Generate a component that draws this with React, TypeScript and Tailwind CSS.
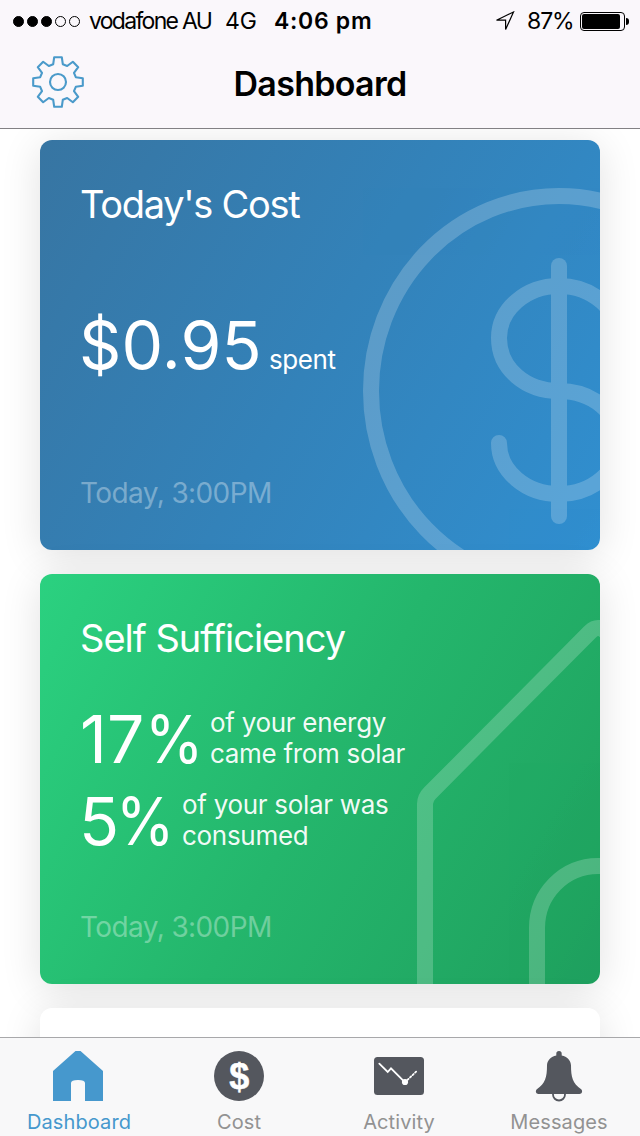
import type { ReactNode } from 'react';
import clsx from 'clsx';

// One gear tooth, pointing up; the outline repeats it every 45 degrees
const TOOTH = [
  [-4.8, -17.8],
  [-3.8, -24.8],
  [3.8, -24.8],
  [4.8, -17.8],
];

const gearPoints = Array.from({ length: 8 }, (_, i) => {
  const angle = (i * Math.PI) / 4;
  return TOOTH.map(([x, y]) => {
    const px = x * Math.cos(angle) - y * Math.sin(angle);
    const py = x * Math.sin(angle) + y * Math.cos(angle);
    return `${px.toFixed(2)},${py.toFixed(2)}`;
  }).join(' ');
}).join(' ');

function GearIcon() {
  return (
    <svg viewBox="-26 -26 52 52" className="h-[52px] w-[52px]" fill="none" stroke="#4a9aca" strokeWidth="2.1" strokeLinejoin="round">
      <polygon points={gearPoints} />
      <circle r="8" />
    </svg>
  );
}

function StatusBar() {
  return (
    <div className="flex h-[42px] items-center pl-[13px] pr-[11px] text-[23px] leading-none">
      <div className="flex gap-[3px]">
        {[1, 2, 3, 4, 5].map((dot) => (
          <span key={dot} className={clsx('h-[11px] w-[11px] rounded-full border border-black', dot <= 3 && 'bg-black')} />
        ))}
      </div>
      <span className="ml-[9px] w-[136px] whitespace-nowrap tracking-[-1.7px]">vodafone AU</span>
      <span className="w-[49px] tracking-[-0.2px]">4G</span>
      <span className="whitespace-nowrap font-semibold tracking-[0.7px]">4:06 pm</span>
      <svg viewBox="0 0 20 20" className="ml-auto mr-[12px] h-5 w-5" fill="none" stroke="black" strokeWidth="1.2">
        <path d="M18.5 1 L1.5 9.2 H10.6 V18.6 Z" />
      </svg>
      <span className="w-[53px] tracking-[-1.1px]">87%</span>
      <div className="flex items-center">
        <div className="h-[19px] w-[45px] rounded-[4px] border border-black p-px">
          <div className="h-full w-[38px] rounded-[2px] bg-black" />
        </div>
        <div className="ml-px h-[7px] w-[3px] rounded-r-full bg-black" />
      </div>
    </div>
  );
}

interface CardProps {
  title: string;
  titleClassName: string;
  time: string;
  className: string;
  art: ReactNode;
  children: ReactNode;
}

function Card({ title, titleClassName, time, className, art, children }: CardProps) {
  return (
    <section
      className={clsx(
        'relative flex h-[410px] shrink-0 flex-col overflow-hidden rounded-[12px] bg-linear-120 pb-[43px] pl-[40px] pt-[45px] text-white shadow-[0_6px_40px_rgba(0,0,0,0.12)]',
        className
      )}
    >
      <svg viewBox="0 0 560 410" className="absolute inset-0 h-full w-full">
        <g opacity="0.2" fill="none" stroke="white" strokeWidth="16" strokeLinecap="round">
          {art}
        </g>
      </svg>
      <h2 className={clsx('text-[38px] leading-none', titleClassName)}>{title}</h2>
      {children}
      <p className="mt-auto text-[28px] leading-none tracking-[-0.6px] text-white/35">{time}</p>
    </section>
  );
}

interface StatProps {
  value: number;
  className: string;
  children: ReactNode;
}

function Stat({ value, className, children }: StatProps) {
  return (
    <div className="flex h-[66px]">
      <span className={clsx('shrink-0 whitespace-nowrap text-[66px] leading-[64px]', className)}>
        {value}
        <span className="inline-block origin-left scale-x-90">%</span>
      </span>
      <p className="text-[26px] leading-[31px] tracking-[-0.3px] text-white/95">{children}</p>
    </div>
  );
}

const tabs = [
  {
    label: 'Dashboard',
    icon: <path fill="#4698cd" d="M21.5 0H26.5L49 20V50H31V32Q31 29 24 29Q17 29 17 32V50H-1V20Z" />,
  },
  {
    label: 'Cost',
    icon: (
      <>
        <circle cx="25" cy="25" r="25" fill="#54575e" />
        <text x="25.2" y="37.5" textAnchor="middle" fill="white" stroke="white" strokeWidth="0.5" className="font-['Liberation_Sans'] text-[36px] font-bold">
          $
        </text>
      </>
    ),
  },
  {
    label: 'Activity',
    icon: (
      <>
        <rect y="6" width="50" height="38" rx="3.5" fill="#54575e" />
        <g fill="none" stroke="white" strokeWidth="1.8" strokeLinecap="round">
          <path d="M5.3 12.6L13.7 21L17 17.3L31 31.3" />
          <path d="M31 31.3L42.5 20.3" strokeDasharray="1.4 2.1" />
        </g>
        <circle cx="31" cy="31" r="3.1" fill="white" />
      </>
    ),
  },
  {
    label: 'Messages',
    icon: (
      <>
        <circle cx="25" cy="43.5" r="6" fill="none" stroke="#54575e" strokeWidth="1.8" />
        <path
          fill="#54575e"
          d="M22.3 4.4V2.7A2.7 2.7 0 0 1 27.7 2.7V4.4C33 5.4 37 9.3 37 14.5C37 26 38.6 32.5 47.2 38.3C49 40 48 43 45.5 43H4.5C2 43 1 40 2.8 38.3C11.4 32.5 13 26 13 14.5C13 9.3 17 5.4 22.3 4.4Z"
        />
      </>
    ),
  },
];

export default function App() {
  return (
    <div className="flex h-[1136px] w-[640px] flex-col overflow-hidden bg-white font-['Inter','Liberation_Sans',sans-serif] text-black">
      <header className="relative z-10 h-[129px] shrink-0 border-b border-[#828084] bg-[#faf7fb]">
        <StatusBar />
        <div className="grid h-[84px] grid-cols-[1fr_auto_1fr] items-center pl-8">
          <button type="button" aria-label="Settings" className="w-[52px] pb-1">
            <GearIcon />
          </button>
          <h1 className="-ml-8 text-[34px] font-semibold leading-none tracking-[-0.7px]">Dashboard</h1>
        </div>
      </header>

      <main className="flex min-h-0 flex-1 flex-col gap-6 overflow-hidden px-10 pt-[11px]">
        <Card
          title="Today's Cost"
          titleClassName="tracking-[-1.3px]"
          time="Today, 3:00PM"
          className="from-[#3775a2] via-[#3382b9] to-[#308fd0]"
          art={
            <>
              <ellipse cx="519" cy="251" rx="188" ry="195" />
              <path d="M519 126V376" />
              <path d="M579 198A60 52 0 0 0 459 198C459 229 486 251 519 251C552 251 579 272 579 303A60 51 0 0 1 459 303" />
            </>
          }
        >
          <div className="mt-[89px] flex items-baseline gap-[7px]">
            <span className="-ml-px text-[66px] leading-none tracking-[0.2px]">$0.95</span>
            <span className="text-[26px] leading-none tracking-[-0.4px]">spent</span>
          </div>
        </Card>

        <Card
          title="Self Sufficiency"
          titleClassName="tracking-[-1px]"
          time="Today, 3:00PM"
          className="from-[#2bd180] via-[#24b66c] to-[#1fa05e]"
          art={
            <>
              <path d="M385 430V230Q385 224 390 219L550 58Q558 50 566 58L580 72" />
              <path d="M497 430V354A61 62 0 0 1 558 292H580" />
            </>
          }
        >
          <div className="mt-[50px] flex flex-col gap-4">
            <Stat value={17} className="w-[130px] tracking-[0.2px]">
              of your energy
              <br />
              came from solar
            </Stat>
            <Stat value={5} className="-ml-px w-[103px] tracking-[-3px]">
              of your solar was
              <br />
              consumed
            </Stat>
          </div>
        </Card>

        <section className="relative h-[410px] shrink-0 rounded-[12px] bg-white shadow-[0_6px_40px_rgba(0,0,0,0.12)]" />
      </main>

      <nav className="relative z-10 grid h-[99px] shrink-0 grid-cols-4 border-t border-[#a8a8aa] bg-[#f8f8f9]">
        {tabs.map((tab, i) => (
          <button key={tab.label} type="button" className="flex flex-col items-center pr-[2px] pt-[13px]">
            <svg viewBox="0 0 50 50" className="h-[50px] w-[50px] shrink-0 overflow-visible">
              {tab.icon}
            </svg>
            <span className={clsx('mt-[11px] text-[20px] leading-none tracking-[0.1px]', i === 0 ? 'text-[#4698cd]' : 'text-[#929292]')}>
              {tab.label}
            </span>
          </button>
        ))}
      </nav>
    </div>
  );
}
